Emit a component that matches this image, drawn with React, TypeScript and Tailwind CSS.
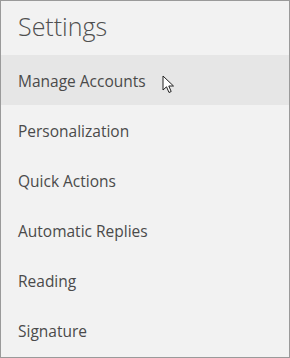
import { useState } from "react";

const items = [
  "Manage Accounts",
  "Personalization",
  "Quick Actions",
  "Automatic Replies",
  "Reading",
  "Signature",
];

function Cursor() {
  return (
    <svg width="14" height="20" viewBox="0 0 14 20" className="ml-[16px] mt-[6px]">
      <path
        d="M1 1 L1 15 L4.5 11.8 L7 17.5 L9.2 16.5 L6.8 11 L11.5 11 Z"
        fill="#fff"
        stroke="#222"
        strokeWidth="1"
        strokeLinejoin="round"
      />
    </svg>
  );
}

export default function App() {
  const [active] = useState(0);

  return (
    <div
      className="w-[290px] h-[358px] bg-[#f2f2f2] border border-[#9a9a9a] overflow-hidden"
      style={{ fontFamily: "'Open Sans', 'Noto Sans', sans-serif" }}
    >
      <div className="h-[54px] pl-[17px] pt-[7px] text-[25px] text-[#4f4f4f] font-light leading-[36px]">
        Settings
      </div>
      {items.map((item, i) => (
        <div
          key={item}
          className={`h-[50px] flex items-center pl-[17px] pt-[3px] text-[15.5px] text-[#4a4a4a] ${
            i === active ? "bg-[#e6e6e6]" : ""
          }`}
        >
          <span>{item}</span>
          {i === active && <Cursor />}
        </div>
      ))}
    </div>
  );
}
